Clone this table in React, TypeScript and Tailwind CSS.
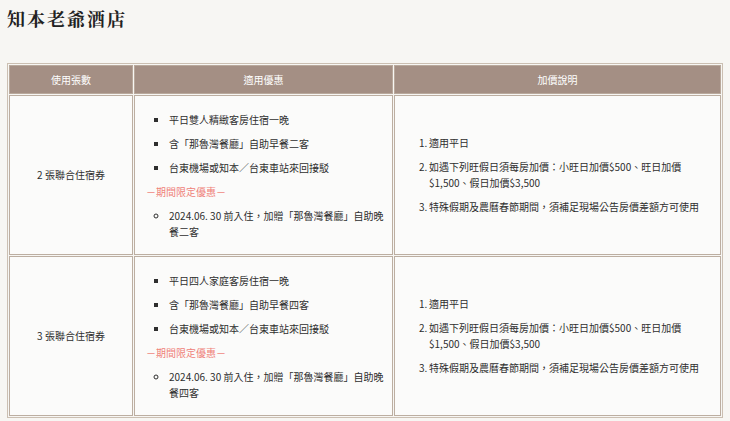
import React from "react";

interface Plan {
  label: string;
  perks: string[];
  promo: string;
}

const plans: Plan[] = [
  {
    label: "2 張聯合住宿券",
    perks: ["平日雙人精緻客房住宿一晚", "含「那魯灣餐廳」自助早餐二客", "台東機場或知本／台東車站來回接駁"],
    promo: "2024.06. 30 前入住，加贈「那魯灣餐廳」自助晚餐二客",
  },
  {
    label: "3 張聯合住宿券",
    perks: ["平日四人家庭客房住宿一晚", "含「那魯灣餐廳」自助早餐四客", "台東機場或知本／台東車站來回接駁"],
    promo: "2024.06. 30 前入住，加贈「那魯灣餐廳」自助晚餐四客",
  },
];

const notes = [
  "適用平日",
  "如遇下列旺假日須每房加價：小旺日加價$500、旺日加價$1,500、假日加價$3,500",
  "特殊假期及農曆春節期間，須補足現場公告房價差額方可使用",
];

const headers = ["使用張數", "適用優惠", "加價說明"];

export default function App() {
  return (
    <div
      className="min-h-[421px] w-[730px] bg-[#f7f6f3] px-[7px] pt-[6px] text-[#2e2e2e]"
      style={{ fontFamily: '"Noto Sans CJK TC", "Noto Sans", sans-serif' }}
    >
      <h1
        className="text-[18px] font-bold leading-[24px] tracking-[2px] text-[#222]"
        style={{ fontFamily: '"Noto Serif CJK TC", "Noto Sans CJK TC", serif' }}
      >
        知本老爺酒店
      </h1>

      <table className="mt-[33px] w-[716px] table-fixed border-separate border-spacing-[1px] border border-[#cbbfb2] text-[10px] leading-[16px]">
        <colgroup>
          <col className="w-[124px]" />
          <col className="w-[259px]" />
          <col />
        </colgroup>
        <thead>
          <tr>
            {headers.map((h) => (
              <th
                key={h}
                className="h-[29px] border border-[#b9a99c] bg-[#a48f84] text-center font-normal text-white"
              >
                {h}
              </th>
            ))}
          </tr>
        </thead>
        <tbody>
          {plans.map((plan) => (
            <tr key={plan.label}>
              <td className="border border-[#bcaea1] bg-[#fbfbfa] text-center align-middle">
                {plan.label}
              </td>
              <td className="border border-[#bcaea1] bg-[#fbfbfa] pb-[14px] pl-[11px] pr-[6px] pt-[16px] align-middle">
                <ul className="flex list-[square] flex-col gap-[8px] pl-[23px]">
                  {plan.perks.map((p) => (
                    <li key={p}>{p}</li>
                  ))}
                </ul>
                <p className="mt-[8px] text-[#ef8179]">－期間限定優惠－</p>
                <ul className="mt-[8px] list-[circle] pl-[23px]">
                  <li>{plan.promo}</li>
                </ul>
              </td>
              <td className="border border-[#bcaea1] bg-[#fbfbfa] pl-[24px] pr-[17px] align-middle">
                <div className="flex flex-col gap-[8px]">
                  {notes.map((n, i) => (
                    <div key={i} className="flex">
                      <span className="w-[10px] shrink-0">{i + 1}.</span>
                      <span>{n}</span>
                    </div>
                  ))}
                </div>
              </td>
            </tr>
          ))}
        </tbody>
      </table>
    </div>
  );
}
